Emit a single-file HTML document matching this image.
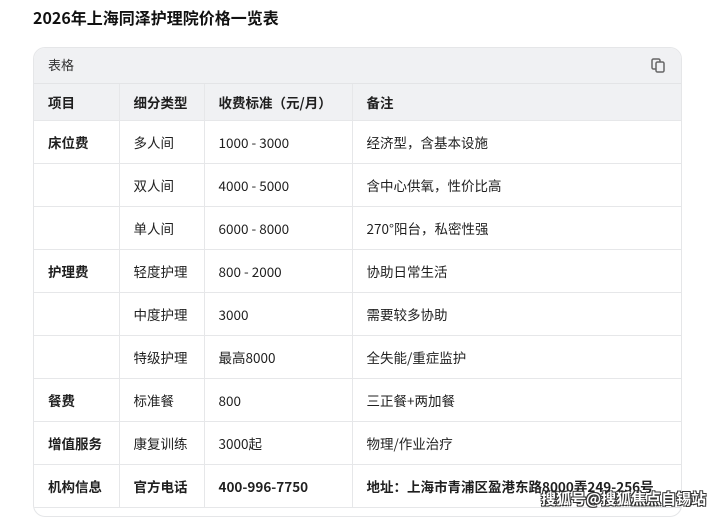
<!DOCTYPE html>
<html><head><meta charset="utf-8"><style>
*{margin:0;padding:0;box-sizing:border-box}
body{width:724px;height:518px;background:#fff;font-family:"Noto Sans CJK SC","Liberation Sans",sans-serif;color:#1f1f1f;position:relative;overflow:hidden}
h1{position:absolute;left:33px;top:6px;font-size:16px;line-height:22px;font-weight:bold;color:#111}
.box{position:absolute;left:33px;top:47px;width:649px;height:470px;border:1px solid #e5e6e8;border-radius:12px;overflow:hidden}
.bar{height:36px;background:#f0f1f3;border-bottom:1px solid #e3e4e6;font-size:13px;line-height:34px;padding-left:14px;color:#333;position:relative}
.copy{position:absolute;right:16px;top:10px}
table{border-collapse:collapse;width:100%;font-size:13.5px;line-height:18px}
td,th{border-right:1px solid #e6e7e9;border-bottom:1px solid #e6e7e9;padding:0 14px;text-align:left;height:43px;vertical-align:middle}
td:last-child,th:last-child{border-right:none}
th{background:#f0f1f3;height:36px;font-weight:bold}
.b{font-weight:bold}
.wm{position:absolute;left:541px;top:489px;font-size:15px;line-height:20px;font-weight:bold;color:#fff;text-shadow:-1px -1px 0 #333,1px -1px 0 #333,-1px 1px 0 #333,1px 1px 0 #333}
</style></head><body>
<h1>2026年上海同泽护理院价格一览表</h1>
<div class="box">
<div class="bar">表格<svg class="copy" width="14" height="15" viewBox="0 0 14 15"><rect x="1" y="1" width="8" height="10" rx="1.5" fill="none" stroke="#666" stroke-width="1.5"/><rect x="5" y="4" width="8" height="10" rx="1.5" fill="#f0f1f3" stroke="#666" stroke-width="1.5"/></svg></div>
<table>
<colgroup><col style="width:85px"><col style="width:85px"><col style="width:148px"><col></colgroup>
<tr><th>项目</th><th>细分类型</th><th>收费标准（元/月）</th><th>备注</th></tr>
<tr><td class="b">床位费</td><td>多人间</td><td>1000 - 3000</td><td>经济型，含基本设施</td></tr>
<tr><td></td><td>双人间</td><td>4000 - 5000</td><td>含中心供氧，性价比高</td></tr>
<tr><td></td><td>单人间</td><td>6000 - 8000</td><td>270°阳台，私密性强</td></tr>
<tr><td class="b">护理费</td><td>轻度护理</td><td>800 - 2000</td><td>协助日常生活</td></tr>
<tr><td></td><td>中度护理</td><td>3000</td><td>需要较多协助</td></tr>
<tr><td></td><td>特级护理</td><td>最高8000</td><td>全失能/重症监护</td></tr>
<tr><td class="b">餐费</td><td>标准餐</td><td>800</td><td>三正餐+两加餐</td></tr>
<tr><td class="b">增值服务</td><td>康复训练</td><td>3000起</td><td>物理/作业治疗</td></tr>
<tr><td class="b">机构信息</td><td class="b">官方电话</td><td class="b">400-996-7750</td><td class="b">地址：上海市青浦区盈港东路8000弄249-256号</td></tr>
</table>
</div>
<div class="wm">搜狐号@搜狐焦点自锡站</div>
</body></html>
